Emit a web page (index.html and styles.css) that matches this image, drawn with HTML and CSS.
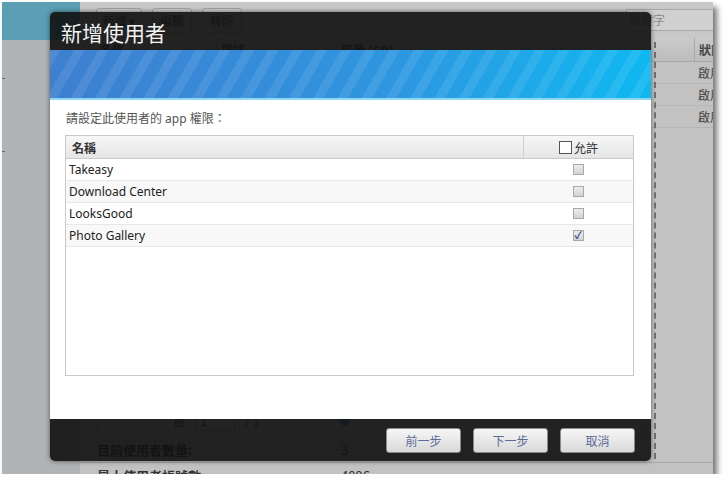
FILE: index.html
```html
<!DOCTYPE html>
<html lang="zh-Hant">

<head>
    <meta charset="UTF-8">
    <title>新增使用者</title>
    <link rel="stylesheet" href="styles.css">
</head>

<body>
    <div class="shot">
        <aside class="side">
            <div class="side-top"></div>
            <span class="tick"></span>
            <span class="tick"></span>
        </aside>

        <main class="app">
            <div class="toolbar">
                <span class="tb-btn wide">新增 ▾</span>
                <span class="tb-btn">編輯</span>
                <span class="tb-btn">移除</span>
                <span class="search">關鍵字</span>
            </div>

            <div class="list">
                <div class="list-row list-head">
                    <span>名稱</span><span>描述</span><span>容量 (GB)</span><span>狀態</span>
                </div>
                <div class="list-row"><span>admin</span><span></span><span></span><span>啟用</span></div>
                <div class="list-row"><span>guest</span><span></span><span></span><span>啟用</span></div>
                <div class="list-row"><span>user</span><span></span><span></span><span>啟用</span></div>
            </div>

            <div class="fill"></div>

            <div class="pager">
                <span class="pg-sep"></span>
                <span>頁</span>
                <span class="pg-input">1</span>
                <span>/ 1</span>
                <span class="pg-sep"></span>
                <span class="pg-icon"></span>
            </div>

            <div class="stat"><span>目前使用者數量:</span><span>3</span></div>
            <div class="stat"><span>最大使用者帳號數</span><span>4096</span></div>
        </main>

        <div class="dialog">
            <div class="dlg-title">新增使用者</div>
            <div class="dlg-banner"></div>

            <div class="dlg-body">
                <p class="hint">請設定此使用者的 app 權限：</p>

                <div class="perm">
                    <div class="perm-row perm-head">
                        <span class="name">名稱</span>
                        <span class="allow"><span class="head-box"></span>允許</span>
                    </div>
                    <div class="perm-row">
                        <span class="name">Takeasy</span>
                        <span class="allow"><span class="box"></span></span>
                    </div>
                    <div class="perm-row">
                        <span class="name">Download Center</span>
                        <span class="allow"><span class="box"></span></span>
                    </div>
                    <div class="perm-row">
                        <span class="name">LooksGood</span>
                        <span class="allow"><span class="box"></span></span>
                    </div>
                    <div class="perm-row">
                        <span class="name">Photo Gallery</span>
                        <span class="allow"><span class="box checked">✓</span></span>
                    </div>
                </div>
            </div>

            <div class="dlg-foot">
                <button>前一步</button>
                <button>下一步</button>
                <button>取消</button>
            </div>
        </div>
    </div>
</body>

</html>
```

FILE: styles.css
```css
body {
    margin: 0;
    background-color: #fff;
    font-family: 'Noto Sans', 'Noto Sans CJK TC', sans-serif;
}

/* framed screenshot */
.shot {
    position: relative;
    display: flex;
    width: 711px;
    height: 472px;
    margin: 2px 0 0 2px;
    background-color: #c2c2c2;
    overflow: hidden;
    box-shadow: 4px 5px 6px rgba(0, 0, 0, 0.55);
}

.side {
    width: 78px;
    flex-shrink: 0;
    background-color: #b2b3b5;
    display: flex;
    flex-direction: column;
}

.side-top {
    height: 38px;
    background-color: #5c9fb5;
}

.tick {
    width: 3px;
    height: 1px;
    margin-top: 38px;
    background-color: #666;
}

.tick + .tick {
    margin-top: 72px;
}

/* dimmed app behind the dialog */
.app {
    flex: 1;
    display: flex;
    flex-direction: column;
    overflow: hidden;
    font-family: 'Noto Sans CJK TC', sans-serif;
    font-size: 12px;
    color: #444;
}

.app > * {
    flex-shrink: 0;
}

.toolbar {
    height: 36px;
    box-sizing: border-box;
    display: flex;
    align-items: flex-start;
    gap: 10px;
    padding: 6px 0 0 16px;
    background-color: #c8c8c8;
}

.tb-btn {
    width: 40px;
    height: 25px;
    box-sizing: border-box;
    line-height: 23px;
    text-align: center;
    border: 1px solid #a3a3a3;
    border-radius: 3px;
    background-color: #cdcdcd;
}

.tb-btn.wide {
    width: 46px;
}

.search {
    margin-left: auto;
    width: 90px;
    height: 22px;
    box-sizing: border-box;
    margin-top: 1px;
    margin-right: -3px;
    padding-left: 2px;
    line-height: 20px;
    border: 1px solid #a8a8a8;
    background-color: #d0d0d0;
    color: #8a8a8a;
}

.list-row {
    display: grid;
    grid-template-columns: 136px 120px 358px 1fr;
    height: 22px;
    line-height: 22px;
    border-bottom: 1px solid #b6b6b6;
    box-sizing: border-box;
}

.list-row span {
    padding-left: 4px;
    white-space: nowrap;
}

.list-row span:first-child {
    padding-left: 20px;
}

.list-head {
    height: 24px;
    line-height: 24px;
    font-weight: bold;
    background: linear-gradient(#cbcbcb, #bcbcbc);
    border-bottom-color: #a6a6a6;
}

.list-head span + span {
    border-left: 1px solid #a8a8a8;
}

.fill {
    height: 277px;
}

.pager {
    display: flex;
    align-items: center;
    gap: 10px;
    width: 545px;
    height: 32px;
    box-sizing: border-box;
    margin-left: 17px;
    padding-left: 64px;
    border: 1px solid #a9a9a9;
    background-color: #c6c6c6;
}

.pg-sep {
    width: 1px;
    height: 18px;
    background-color: #9c9c9c;
}

.pg-input {
    width: 34px;
    height: 18px;
    line-height: 18px;
    padding-left: 4px;
    border: 1px solid #999;
    background-color: #d8d8d8;
}

.pg-icon {
    width: 10px;
    height: 10px;
    margin-left: 60px;
    border-radius: 50%;
    background-color: #3d78c8;
}

.stat {
    display: grid;
    grid-template-columns: 244px 1fr;
    height: 25px;
    line-height: 25px;
    padding-left: 17px;
    font-size: 13px;
    font-weight: bold;
    color: #333;
    border-bottom: 1px solid #a9a9a9;
}

.stat span + span {
    font-weight: normal;
}

/* dialog */
.dialog {
    position: absolute;
    left: 48px;
    top: 10px;
    width: 601px;
    height: 449px;
    display: flex;
    flex-direction: column;
    border-radius: 5px;
    box-shadow: 0 0 5px rgba(0, 0, 0, 0.55);
}

.dialog::after {
    content: '';
    position: absolute;
    top: 30px;
    bottom: 2px;
    right: -5px;
    border-right: 2px dashed #6e6e6e;
}

.dlg-title {
    height: 38px;
    flex-shrink: 0;
    padding-left: 11px;
    line-height: 40px;
    font-family: 'Noto Sans CJK TC', sans-serif;
    font-size: 21px;
    color: #f4f4f4;
    background-color: rgba(16, 16, 16, 0.9);
    border-radius: 5px 5px 0 0;
}

.dlg-banner {
    height: 50px;
    flex-shrink: 0;
    box-sizing: border-box;
    border-bottom: 2px solid #8fd8f4;
    background:
        repeating-linear-gradient(120deg, rgba(255, 255, 255, 0.09) 0 9px, rgba(255, 255, 255, 0) 9px 21px),
        linear-gradient(90deg, #3e7fd0, #2f95df 55%, #0fb8f1);
}

.dlg-body {
    flex: 1;
    background-color: #fff;
    padding: 0 17px 0 15px;
}

.hint {
    margin: 11px 0 8px 1px;
    line-height: 16px;
    font-size: 12px;
    color: #555;
}

.perm {
    height: 241px;
    box-sizing: border-box;
    border: 1px solid #c9c9c9;
    font-size: 12px;
    color: #222;
}

.perm-row {
    display: grid;
    grid-template-columns: 457px 1fr;
    height: 22px;
    box-sizing: border-box;
    border-bottom: 1px solid #e8e8e8;
    align-items: center;
}

.perm-row:nth-child(odd) {
    background-color: #f8f8f8;
}

.perm-row .name {
    padding-left: 3px;
}

.perm-head {
    height: 23px;
    background: linear-gradient(#f7f7f7, #e5e5e5);
    border-bottom: 1px solid #cacaca;
    font-family: 'Noto Sans CJK TC', sans-serif;
    font-weight: bold;
    color: #333;
}

.perm-head .name {
    padding-left: 6px;
}

.perm-head .allow {
    height: 100%;
    border-left: 1px solid #cfcfcf;
    font-weight: normal;
}

.allow {
    display: flex;
    align-items: center;
    justify-content: center;
    gap: 2px;
}

.head-box {
    width: 13px;
    height: 13px;
    box-sizing: border-box;
    border: 1px solid #555;
    background-color: #fff;
}

.box {
    width: 11px;
    height: 11px;
    box-sizing: border-box;
    border: 1px solid #a9a9a9;
    background: linear-gradient(#ececec, #d3d3d3);
    font-size: 10px;
    line-height: 9px;
    text-align: center;
    color: #2c4aa0;
    font-weight: bold;
}

.dlg-foot {
    height: 42px;
    flex-shrink: 0;
    box-sizing: border-box;
    display: flex;
    justify-content: flex-end;
    gap: 12px;
    padding: 9px 16px 0 0;
    background-color: rgba(16, 16, 16, 0.9);
    border-radius: 0 0 5px 5px;
}

.dlg-foot button {
    width: 75px;
    height: 25px;
    border: 1px solid #8a8a8a;
    border-radius: 3px;
    background: linear-gradient(#f6f6f6, #d9d9d9);
    font-family: 'Noto Sans CJK TC', sans-serif;
    font-size: 12px;
    color: #5d6b98;
    cursor: pointer;
}
```
